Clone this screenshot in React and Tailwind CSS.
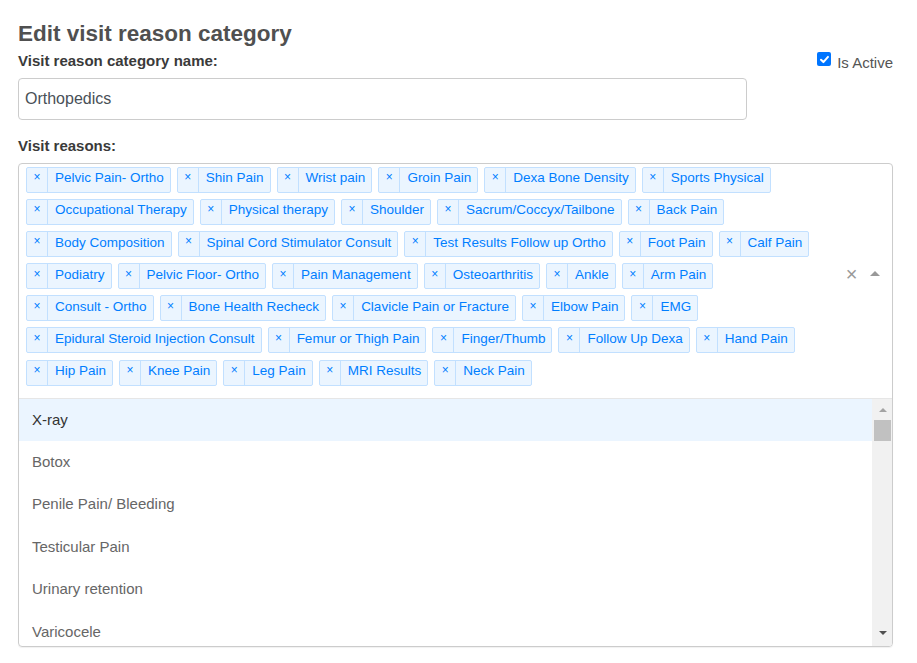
import React from 'react';

const tags = [
  'Pelvic Pain- Ortho', 'Shin Pain', 'Wrist pain', 'Groin Pain', 'Dexa Bone Density', 'Sports Physical',
  'Occupational Therapy', 'Physical therapy', 'Shoulder', 'Sacrum/Coccyx/Tailbone', 'Back Pain',
  'Body Composition', 'Spinal Cord Stimulator Consult', 'Test Results Follow up Ortho', 'Foot Pain', 'Calf Pain',
  'Podiatry', 'Pelvic Floor- Ortho', 'Pain Management', 'Osteoarthritis', 'Ankle', 'Arm Pain',
  'Consult - Ortho', 'Bone Health Recheck', 'Clavicle Pain or Fracture', 'Elbow Pain', 'EMG',
  'Epidural Steroid Injection Consult', 'Femur or Thigh Pain', 'Finger/Thumb', 'Follow Up Dexa', 'Hand Pain',
  'Hip Pain', 'Knee Pain', 'Leg Pain', 'MRI Results', 'Neck Pain',
];

const options = ['X-ray', 'Botox', 'Penile Pain/ Bleeding', 'Testicular Pain', 'Urinary retention', 'Varicocele'];

function Tag({ label }) {
  return (
    <div className="flex h-[26px] items-stretch rounded-[2px] border border-[#c2e0ff] bg-[#ebf5ff] text-[13.5px] text-[#007eff]">
      <span className="flex w-[21px] items-center justify-center border-r border-[#c2e0ff] pb-[5px] text-[12px]">×</span>
      <span className="flex items-center pb-[3px] pl-[7px] pr-[6px] leading-none">{label}</span>
    </div>
  );
}

export default function App() {
  return (
    <div className="min-h-screen bg-white pl-[18px] pr-[24px] pt-[19.5px] font-['Liberation_Sans',Arial,sans-serif] text-[15px] text-[#333]">
      <h3 className="text-[22.5px] font-bold leading-[27px] text-[#505050]">Edit visit reason category</h3>

      <div className="mt-[3px] flex items-start justify-between">
        <div className="w-[729px]">
          <div className="font-bold leading-[21px] text-[#3a3a3a]">Visit reason category name:</div>
          <input
            type="text"
            defaultValue="Orthopedics"
            className="mt-[7.5px] h-[42px] w-full rounded-[4px] border border-[#ccc] bg-white px-[6px] text-[16px] text-[#495057] outline-none"
          />
        </div>
        <label className="flex items-start">
          <span className="mt-[2.5px] flex h-[14px] w-[14px] items-center justify-center rounded-[2px] bg-[#0075ff]">
            <svg viewBox="0 0 12 12" className="h-[11px] w-[11px]" fill="none" stroke="white" strokeWidth="2.2" strokeLinecap="round" strokeLinejoin="round">
              <path d="M2.2 6.3 4.8 8.8 9.8 3.2" />
            </svg>
          </span>
          <span className="ml-[6px] mt-[2px] leading-[21px] text-[#555]">Is Active</span>
        </label>
      </div>

      <div className="mt-[14.5px] font-bold leading-[21px] text-[#3a3a3a]">Visit reasons:</div>

      <div className="mt-[7.5px] overflow-hidden rounded-[4px] border border-[#ccc] shadow-[0_1px_1px_rgba(0,0,0,0.06)]">
        {/* control */}
        <div className="flex">
          <div className="flex flex-1 flex-wrap gap-x-[6px] gap-y-[6.2px] pb-[12px] pl-[7px] pt-[2.5px]">
            {tags.map((t) => (
              <Tag key={t} label={t} />
            ))}
          </div>
          <div className="flex items-center pb-[14px] pr-[5px]">
            <span className="flex w-[17px] justify-center text-[20px] leading-none text-[#999]">×</span>
            <span className="ml-[2px] flex w-[25px] justify-center">
              <span className="h-0 w-0 border-x-[5px] border-b-[5px] border-x-transparent border-b-[#999]"></span>
            </span>
          </div>
        </div>

        {/* menu */}
        <div className="flex h-[248px] border-t border-[#e6e6e6]">
          <div className="flex-1 overflow-hidden">
            {options.map((o, i) => (
              <div
                key={o}
                className={`flex h-[42.4px] items-center px-[13px] ${i === 0 ? 'bg-[#ebf5ff] text-[#333]' : 'text-[#666]'}`}
              >
                {o}
              </div>
            ))}
          </div>
          <div className="flex w-[20px] flex-col bg-[#f1f1f1]">
            <div className="flex h-[21px] items-center justify-center pl-[1px] pt-[1px]">
              <span className="h-0 w-0 border-x-[4px] border-b-[4px] border-x-transparent border-b-[#a3a3a3]"></span>
            </div>
            <div className="ml-[2px] mr-[1px] h-[21px] bg-[#c1c1c1]"></div>
            <div className="flex-1"></div>
            <div className="flex h-[21px] items-center justify-center pb-[5px] pl-[1px]">
              <span className="h-0 w-0 border-x-[4px] border-t-[4px] border-x-transparent border-t-[#505050]"></span>
            </div>
          </div>
        </div>
      </div>
    </div>
  );
}
